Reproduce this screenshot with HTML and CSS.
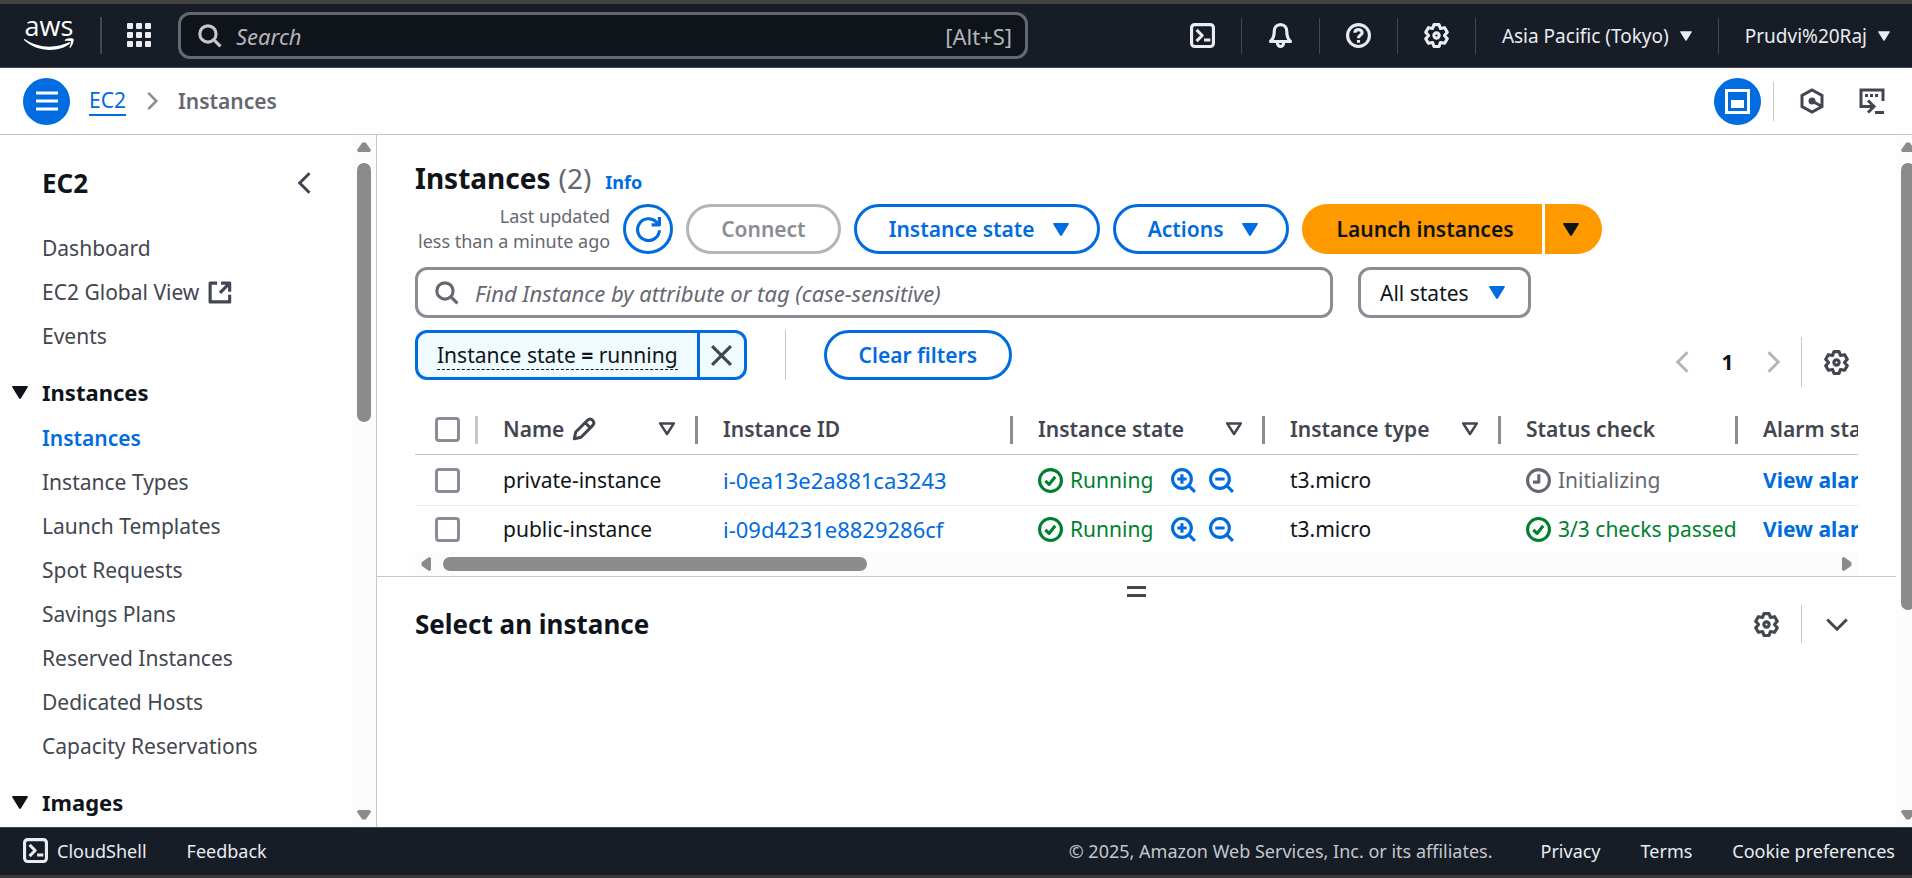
FILE: index.html
```html
<!DOCTYPE html>
<html lang="en">
<head>
<meta charset="utf-8">
<title>Instances | EC2 | Asia Pacific (Tokyo)</title>
<link rel="stylesheet" href="styles.css">
</head>
<body>
<svg class="sprite" aria-hidden="true">
  <symbol id="i-search" viewBox="0 0 16 16"><circle cx="7" cy="7" r="5.2"/><path d="M11 11l4 4"/></symbol>
  <symbol id="i-shell" viewBox="0 0 16 16"><rect x="1" y="1" width="14" height="14" rx="2"/><path d="M4.2 4.4L7.8 8l-3.6 3.6M9 10.9h4"/></symbol>
  <symbol id="i-bell" viewBox="0 0 16 16"><path d="M8 1C5.400 1 4 3 4 5.200C4 8.500 3.400 10 1.600 11.800H14.400C12.600 10 12 8.500 12 5.200C12 3 10.600 1 8 1z"/><path d="M6 12.500C6 14 7 15 8 15S10 14 10 12.500"/></symbol>
  <symbol id="i-help" viewBox="0 0 16 16"><circle cx="8" cy="8" r="7"/><path d="M5.700 6.300C5.700 5 6.700 4.200 8 4.200S10.300 5 10.300 6.200C10.300 7.800 8 7.700 8 9.700M8 10.900v1.800"/></symbol>
  <symbol id="i-gear" viewBox="0 0 16 16"><path d="M6.400 1H9.600L10.500 3.500L13.200 3L14.900 5.900L13.100 8L14.900 10.100L13.200 13L10.500 12.500L9.600 15H6.400L5.500 12.500L2.800 13L1.100 10.100L2.900 8L1.100 5.900L2.800 3L5.500 3.500z"/><circle cx="8" cy="8" r="1.700"/></symbol>
  <symbol id="i-caret" viewBox="0 0 16 13"><path class="solid" d="M1 0H15Q16.500 0 15.600 1.400L9 12.200Q8 13.600 7 12.200L.4 1.400Q-.5 0 1 0z"/></symbol>
  <symbol id="i-sort" viewBox="0 0 16 16"><path d="M2.500 3.500h11L8 12z"/></symbol>
  <symbol id="i-left" viewBox="0 0 16 16"><path d="M11 1.500L4.500 8l6.500 6.500"/></symbol>
  <symbol id="i-right" viewBox="0 0 16 16"><path d="M5 1.500L11.500 8L5 14.500"/></symbol>
  <symbol id="i-down" viewBox="0 0 16 16"><path d="M1.500 5L8 11.500L14.500 5"/></symbol>
  <symbol id="i-close" viewBox="0 0 16 16"><path d="M2 2l12 12M14 2L2 14"/></symbol>
  <symbol id="i-external" viewBox="0 0 16 16"><path d="M6.500 2H2v12h12.500v-4.500M9 2h5.500v5.500M14 2.500L8.300 8.200"/></symbol>
  <symbol id="i-refresh" viewBox="0 0 16 16"><path d="M15 8.500A7 7 0 1 1 13 3.200L14.500 4.500M15 0v5h-5"/></symbol>
  <symbol id="i-pencil" viewBox="0 0 16 16"><path d="M1.500 14.500L2.500 10L10.500 2C11.500 1 12.700 1 13.600 2S15 4.300 14 5.400L6 13.500zM9 4l3.300 3.300"/></symbol>
  <symbol id="i-ok" viewBox="0 0 16 16"><circle cx="8" cy="8" r="7"/><path d="M4.700 8.200l2.400 2.300L11 5.600"/></symbol>
  <symbol id="i-clock" viewBox="0 0 16 16"><circle cx="8" cy="8" r="7"/><path d="M8.200 4v5H4.500"/></symbol>
  <symbol id="i-zoomin" viewBox="0 0 16 16"><circle cx="7" cy="7" r="6"/><path d="M11.300 11.300L15.300 15.300M7 4v6M4 7h6"/></symbol>
  <symbol id="i-zoomout" viewBox="0 0 16 16"><circle cx="7" cy="7" r="6"/><path d="M11.300 11.300L15.300 15.300M4 7h6"/></symbol>
</svg>

<div class="app">
  <header class="topbar">
    <a class="logo" href="#" aria-label="AWS home">
      <svg width="50" height="42" viewBox="0 -8 50 42"><text x="25" y="17" text-anchor="middle">aws</text><path class="solid" d="M0 21C12 33 35 34 46 24.500C46.800 23.800 46 22.800 45 23.300C32 29.500 14 29.500 1 20.300C.2 19.800-.5 20.400 0 21z"/><path class="solid" d="M41 20.700C44 18.700 49 19 49.600 20C50 21 49 26.500 46.300 28.800C45.800 29.200 45.300 28.900 45.500 28.300C46.300 26.500 47.300 23.500 46.800 22.500C46.200 21.600 43 21.900 41.500 22C41 22 40.500 21.200 41 20.700z"/></svg>
    </a>
    <button class="services" aria-label="Services">
      <svg width="25" height="25" viewBox="0 0 25 25"><g class="solid"><rect width="6" height="6" rx="1"/><rect x="9" width="6" height="6" rx="1"/><rect x="18" width="6" height="6" rx="1"/><rect y="9" width="6" height="6" rx="1"/><rect x="9" y="9" width="6" height="6" rx="1"/><rect x="18" y="9" width="6" height="6" rx="1"/><rect y="18" width="6" height="6" rx="1"/><rect x="9" y="18" width="6" height="6" rx="1"/><rect x="18" y="18" width="6" height="6" rx="1"/></g></svg>
    </button>
    <label class="global-search">
      <svg class="icon"><use href="#i-search"/></svg>
      <input type="search" placeholder="Search" aria-label="Search">
      <span class="hint">[Alt+S]</span>
    </label>
    <nav class="tools" aria-label="Account tools">
      <button class="tool" aria-label="CloudShell"><svg class="icon"><use href="#i-shell"/></svg></button>
      <button class="tool" aria-label="Notifications"><svg class="icon"><use href="#i-bell"/></svg></button>
      <button class="tool" aria-label="Help"><svg class="icon"><use href="#i-help"/></svg></button>
      <button class="tool" aria-label="Settings"><svg class="icon"><use href="#i-gear"/></svg></button>
      <button class="tool menu">Asia Pacific (Tokyo)<svg class="caret-s"><use href="#i-caret"/></svg></button>
      <button class="tool menu">Prudvi%20Raj<svg class="caret-s"><use href="#i-caret"/></svg></button>
    </nav>
  </header>

  <div class="crumbbar">
    <button class="round" aria-label="Toggle navigation"><svg width="22" height="20" viewBox="0 0 22 20"><path d="M0 2h22M0 10h22M0 18h22"/></svg></button>
    <nav class="crumbs" aria-label="Breadcrumb">
      <a href="#">EC2</a>
      <svg class="sep"><use href="#i-right"/></svg>
      <span>Instances</span>
    </nav>
    <div class="crumb-tools">
      <button class="round" aria-label="Split panel"><svg width="25" height="25" viewBox="0 0 25 25"><rect x="1.500" y="1.500" width="22" height="22"/><rect class="solid" x="6" y="11" width="13" height="8"/></svg></button>
      <button class="plain" aria-label="Diagnose"><svg width="24" height="26" viewBox="0 0 24 26"><path d="M12 2L22 7.500V18.500L12 24L2 18.500V7.500zM12 13L21 18"/><circle class="solid" cx="12" cy="13" r="3.500"/></svg></button>
      <button class="plain" aria-label="Console to code"><svg width="26" height="26" viewBox="0 0 26 26"><path d="M12 18.500H2V2h22v11M8 18.500h6M9 12.500l6 6l-6 6M16 24.500h9"/><path class="dots" d="M6 7.500h14"/></svg></button>
    </div>
  </div>

  <div class="workspace">
    <aside class="sidebar">
      <nav class="side-content" aria-label="EC2">
        <div class="side-head"><h2>EC2</h2><button class="plain" aria-label="Close navigation"><svg class="chev"><use href="#i-left"/></svg></button></div>
        <ul>
          <li><a href="#">Dashboard</a></li>
          <li><a href="#">EC2 Global View<svg class="icon"><use href="#i-external"/></svg></a></li>
          <li><a href="#">Events</a></li>
        </ul>
        <h3><svg class="caret"><use href="#i-caret"/></svg>Instances</h3>
        <ul>
          <li><a class="active" href="#">Instances</a></li>
          <li><a href="#">Instance Types</a></li>
          <li><a href="#">Launch Templates</a></li>
          <li><a href="#">Spot Requests</a></li>
          <li><a href="#">Savings Plans</a></li>
          <li><a href="#">Reserved Instances</a></li>
          <li><a href="#">Dedicated Hosts</a></li>
          <li><a href="#">Capacity Reservations</a></li>
        </ul>
        <h3><svg class="caret"><use href="#i-caret"/></svg>Images</h3>
      </nav>
      <div class="vscroll" aria-hidden="true"><i class="arrow up"></i><i class="thumb"></i><i class="arrow down"></i></div>
    </aside>

    <main class="main">
      <section class="listing">
        <div class="title"><h1>Instances</h1><span class="count">(2)</span><a href="#">Info</a></div>
        <div class="actions">
          <p class="updated">Last updated<br>less than a minute ago</p>
          <button class="btn icon-only" aria-label="Refresh"><svg class="icon"><use href="#i-refresh"/></svg></button>
          <button class="btn" disabled>Connect</button>
          <button class="btn">Instance state<svg class="caret"><use href="#i-caret"/></svg></button>
          <button class="btn">Actions<svg class="caret"><use href="#i-caret"/></svg></button>
          <div class="split"><button class="launch">Launch instances</button><button class="more" aria-label="More launch options"><svg class="caret"><use href="#i-caret"/></svg></button></div>
        </div>
        <div class="filters">
          <label class="find"><svg class="icon"><use href="#i-search"/></svg><input type="search" placeholder="Find Instance by attribute or tag (case-sensitive)" aria-label="Find Instance"></label>
          <div class="states"><select aria-label="State filter"><option>All states</option></select><svg class="caret"><use href="#i-caret"/></svg></div>
        </div>
        <div class="tokens">
          <div class="applied">
            <div class="token"><button class="token-text"><span>Instance state <b>=</b> running</span></button><button class="token-x" aria-label="Remove filter"><svg class="cross"><use href="#i-close"/></svg></button></div>
            <div class="clear"><button class="btn">Clear filters</button></div>
          </div>
          <div class="pages">
            <button class="plain" disabled aria-label="Previous page"><svg class="chev"><use href="#i-left"/></svg></button>
            <button class="plain current">1</button>
            <button class="plain" disabled aria-label="Next page"><svg class="chev"><use href="#i-right"/></svg></button>
            <button class="plain prefs" aria-label="Preferences"><svg class="icon"><use href="#i-gear"/></svg></button>
          </div>
        </div>
        <div class="table-wrap">
          <table>
            <colgroup><col class="c-check"><col class="c-name"><col class="c-id"><col class="c-state"><col class="c-type"><col class="c-status"><col class="c-alarm"></colgroup>
            <thead>
              <tr>
                <th class="check soft"><input type="checkbox" aria-label="Select all"></th>
                <th><div class="th">Name<svg class="pencil"><use href="#i-pencil"/></svg><svg class="sort"><use href="#i-sort"/></svg></div></th>
                <th><div class="th">Instance ID</div></th>
                <th><div class="th">Instance state<svg class="sort"><use href="#i-sort"/></svg></div></th>
                <th><div class="th">Instance type<svg class="sort"><use href="#i-sort"/></svg></div></th>
                <th><div class="th">Status check</div></th>
                <th><div class="th">Alarm status</div></th>
              </tr>
            </thead>
            <tbody>
              <tr>
                <td class="check"><input type="checkbox" aria-label="Select private-instance"></td>
                <td>private-instance</td>
                <td><a class="id" href="#">i-0ea13e2a881ca3243</a></td>
                <td><div class="cell"><span class="ok"><svg class="icon"><use href="#i-ok"/></svg>Running</span><button class="plain zoom" aria-label="Include state"><svg class="icon"><use href="#i-zoomin"/></svg></button><button class="plain zoom" aria-label="Exclude state"><svg class="icon"><use href="#i-zoomout"/></svg></button></div></td>
                <td>t3.micro</td>
                <td><div class="cell"><span class="wait"><svg class="icon"><use href="#i-clock"/></svg>Initializing</span></div></td>
                <td><a class="strong" href="#">View alarms</a></td>
              </tr>
              <tr>
                <td class="check"><input type="checkbox" aria-label="Select public-instance"></td>
                <td>public-instance</td>
                <td><a class="id" href="#">i-09d4231e8829286cf</a></td>
                <td><div class="cell"><span class="ok"><svg class="icon"><use href="#i-ok"/></svg>Running</span><button class="plain zoom" aria-label="Include state"><svg class="icon"><use href="#i-zoomin"/></svg></button><button class="plain zoom" aria-label="Exclude state"><svg class="icon"><use href="#i-zoomout"/></svg></button></div></td>
                <td>t3.micro</td>
                <td><div class="cell"><span class="ok"><svg class="icon"><use href="#i-ok"/></svg>3/3 checks passed</span></div></td>
                <td><a class="strong" href="#">View alarms</a></td>
              </tr>
            </tbody>
          </table>
        </div>
        <div class="hscroll" aria-hidden="true"><i class="arrow left"></i><i class="thumb"></i><i class="arrow right"></i></div>
      </section>
      <section class="panel">
        <div class="handle" role="separator" aria-label="Resize panel"></div>
        <div class="panel-head">
          <h2>Select an instance</h2>
          <button class="plain" aria-label="Panel preferences"><svg class="icon"><use href="#i-gear"/></svg></button>
          <button class="plain collapse" aria-label="Collapse panel"><svg class="chev"><use href="#i-down"/></svg></button>
        </div>
      </section>
    </main>
    <div class="vscroll page" aria-hidden="true"><i class="arrow up"></i><i class="thumb"></i><i class="arrow down"></i></div>
  </div>

  <footer class="footer">
    <button class="shell"><svg class="icon"><use href="#i-shell"/></svg>CloudShell</button>
    <a class="feedback" href="#">Feedback</a>
    <span class="copy">© 2025, Amazon Web Services, Inc. or its affiliates.</span>
    <a href="#">Privacy</a>
    <a href="#">Terms</a>
    <a href="#">Cookie preferences</a>
  </footer>
</div>
</body>
</html>
```

FILE: styles.css
```css
:root {
  --blue: #006ce0;
  --ink: #0f141a;
  --slate: #424650;
  --grey: #656871;
  --mid: #8c8c94;
  --line: #c6c6cd;
  --navy: #161d26;
  --green: #00802f;
  --thumb: #8b8b8b;
}

* { box-sizing: border-box; }

body {
  margin: 0;
  font: 21px/30px "Noto Sans", "Open Sans", sans-serif;
  color: var(--ink);
  background: #fff;
}

button, input, select { font: inherit; color: inherit; margin: 0; }
button { background: none; border: 0; padding: 0; cursor: pointer; }
a { color: var(--blue); text-decoration: none; }
h1, h2, h3, p, ul { margin: 0; padding: 0; }
ul { list-style: none; }

svg { flex: none; fill: none; stroke: currentColor; stroke-width: 3; display: block; }
.sprite { position: absolute; width: 0; height: 0; }
.solid { fill: currentColor; stroke: none; }
.icon { width: 25px; height: 25px; stroke-width: 2; stroke-linejoin: round; }
.caret { width: 16px; height: 13px; }
.caret-s { width: 12px; height: 10px; }
.chev { width: 24px; height: 24px; stroke-width: 2; }
.plain { display: flex; align-items: center; justify-content: center; color: var(--slate); }

.app { display: flex; flex-direction: column; height: 100vh; overflow: hidden; border-top: 4px solid #434341; border-bottom: 3px solid #39393b; }

/* top bar */
.topbar { display: flex; align-items: center; flex: none; height: 64px; padding: 0 22px 0 24px; background: var(--navy); color: #ebebf0; border-bottom: 1px solid var(--slate); font-size: 19px; }
.logo { display: flex; padding-bottom: 8px; color: #fff; }
.logo text { font: 500 27px "Open Sans", sans-serif; fill: #fff; stroke: none; }
.services { display: flex; align-items: center; height: 37px; margin-left: 26px; padding: 0 26px 0 25px; border-left: 2px solid var(--slate); }
.global-search { display: flex; align-items: center; flex: 0 1 850px; min-width: 0; height: 47px; padding: 0 13px 0 16px; gap: 14px; background: var(--ink); border: 3px solid var(--grey); border-radius: 12px; font-size: 22px; color: #b4b4bb; }
.global-search .icon { color: #c6c6cd; }
input[type="search"] { flex: 1; min-width: 0; padding: 0; border: 0; outline: 0; background: none; appearance: none; }
input::placeholder { font-style: italic; color: inherit; opacity: 1; }
.tools { display: flex; align-items: center; margin-left: auto; }
.tool { display: flex; align-items: center; height: 36px; padding: 0 26px; white-space: nowrap; }
.tool + .tool { border-left: 1px solid var(--slate); }
.tool.menu { gap: 11px; }
.tool:last-child { padding-right: 0; }

/* breadcrumb bar */
.crumbbar { display: flex; align-items: center; flex: none; height: 67px; padding: 0 27px 0 23px; border-bottom: 1px solid var(--line); }
.round { display: flex; align-items: center; justify-content: center; width: 47px; height: 47px; border-radius: 50%; background: var(--blue); color: #fff; }
.crumbs { display: flex; align-items: center; gap: 16px; margin-left: 19px; }
.crumbs a { border-bottom: 2px solid var(--blue); line-height: 28px; }
.crumbs span { font-weight: 600; color: var(--grey); }
.sep { width: 20px; height: 20px; stroke-width: 2; color: var(--mid); }
.crumb-tools { display: flex; align-items: center; margin-left: auto; }
.crumb-tools .plain { height: 39px; }
.crumb-tools .round + .plain { margin-left: 12px; width: 76px; border-left: 1px solid var(--line); }
.crumb-tools .plain:last-child { justify-content: flex-end; width: 36px; }
.dots { stroke-dasharray: 3 2; }

/* body */
.workspace { display: flex; flex: 1; min-height: 0; }
.sidebar { display: flex; flex: none; width: 377px; border-right: 1px solid var(--line); overflow: hidden; }
.side-content { flex: 1; padding: 30px 35px 0 12px; }
.side-head { display: flex; align-items: center; justify-content: space-between; height: 36px; padding-left: 30px; margin-bottom: 25px; }
h2 { font-size: 26px; line-height: 36px; font-weight: 700; }
.side-content li { height: 44px; padding: 7px 0 7px 30px; white-space: nowrap; }
.side-content li a { display: flex; align-items: center; gap: 8px; color: var(--slate); }
.side-content li a.active { color: var(--blue); font-weight: 600; }
h3 { display: flex; align-items: center; gap: 14px; height: 48px; margin-top: 10px; font-size: 22px; font-weight: 700; }

.vscroll { display: flex; flex-direction: column; align-items: center; flex: none; width: 24px; padding: 7px 0; background: #fcfcfc; overflow: hidden; }
.vscroll .thumb { width: 14px; height: 259px; margin-top: 11px; border-radius: 7px; background: var(--thumb); }
.vscroll.page { width: 16px; align-items: flex-start; padding-left: 5px; }
.vscroll.page .arrow, .vscroll.page .thumb { flex: none; }
.vscroll.page .thumb { height: 66%; }
.arrow { width: 14px; height: 10px; background: var(--thumb); }
.arrow.up { clip-path: polygon(38% 6%, 62% 6%, 100% 80%, 92% 100%, 8% 100%, 0 80%); }
.arrow.down { margin-top: auto; clip-path: polygon(8% 0, 92% 0, 100% 20%, 62% 94%, 38% 94%, 0 20%); }
.arrow.left, .arrow.right { width: 10px; height: 14px; }
.arrow.left { clip-path: polygon(80% 0, 100% 8%, 100% 92%, 80% 100%, 6% 62%, 6% 38%); }
.arrow.right { margin-left: auto; clip-path: polygon(20% 0, 94% 38%, 94% 62%, 20% 100%, 0 92%, 0 8%); }

.main { flex: 1; min-width: 0; display: flex; flex-direction: column; }
.listing { padding: 23px 38px 0; }
.title { display: flex; align-items: baseline; height: 42px; line-height: 40px; }
h1 { font-size: 28px; font-weight: 700; line-height: 40px; }
.count { margin-left: 8px; font-size: 28px; color: var(--grey); }
.title a { margin-left: 14px; font-size: 18px; font-weight: 700; }

.actions { display: flex; align-items: center; gap: 13px; margin-top: 4px; }
.updated { padding-left: 3px; font-size: 18px; line-height: 25px; text-align: right; color: var(--grey); white-space: nowrap; }
.btn { display: flex; align-items: center; gap: 18px; height: 50px; padding: 0 32px; border: 3px solid var(--blue); border-radius: 25px; color: var(--blue); font-weight: 600; white-space: nowrap; }
.btn:disabled { border-color: #b4b4bb; color: var(--mid); }
.btn .caret { margin-right: -4px; }
.icon-only { width: 50px; padding: 0; justify-content: center; }
.split { display: flex; gap: 3px; }
.launch, .more { height: 50px; background: #f90; font-weight: 600; white-space: nowrap; }
.launch { padding: 0 28px 0 35px; border-radius: 25px 0 0 25px; }
.more { padding: 0 23px 0 18px; border-radius: 0 25px 25px 0; }

.filters { display: flex; gap: 25px; margin-top: 13px; padding-right: 327px; }
.find { display: flex; align-items: center; flex: 1; height: 51px; padding: 0 16px; gap: 16px; border: 3px solid var(--mid); border-radius: 12px; color: var(--grey); font-size: 22px; }
.states { position: relative; width: 173px; }
.states select { width: 100%; height: 51px; padding: 0 19px; appearance: none; background: #fff; border: 3px solid var(--mid); border-radius: 12px; }
.states .caret { position: absolute; right: 26px; top: 19px; color: var(--blue); pointer-events: none; }

.tokens { display: flex; justify-content: space-between; height: 57px; margin-top: 12px; }
.applied { display: flex; align-items: flex-start; gap: 38px; }
.token { display: flex; height: 50px; border: 3px solid var(--blue); border-radius: 12px; background: #f0fbff; overflow: hidden; }
.token-text { padding: 0 19px; }
.token-text span { border-bottom: 1px dashed var(--ink); }
.token-x { width: 47px; display: flex; align-items: center; justify-content: center; border-left: 3px solid var(--blue); color: var(--slate); }
.cross { width: 25px; height: 25px; stroke-width: 2; }
.clear { border-left: 1px solid var(--line); padding-left: 38px; }
.pages { display: flex; align-items: center; align-self: flex-end; height: 50px; }
.pages .plain { width: 45px; height: 50px; }
.pages .plain:disabled { color: #b4b4bb; }
.pages .current { color: var(--ink); font-weight: 700; font-size: 21px; }
.pages .prefs { width: 57px; margin-left: 6px; padding-right: 9px; justify-content: flex-end; border-left: 1px solid var(--line); }

.table-wrap { margin-top: 17px; overflow: hidden; }
table { width: 1563px; table-layout: fixed; border-collapse: separate; border-spacing: 0; }
.c-check { width: 63px; }
.c-name { width: 220px; }
.c-id { width: 315px; }
.c-state { width: 252px; }
.c-type { width: 236px; }
.c-status { width: 237px; }
.c-alarm { width: 240px; }
th { position: relative; height: 51px; padding: 0 21px 0 25px; text-align: left; color: var(--slate); font-weight: 600; border-bottom: 1px solid var(--line); }
th::after { content: ""; position: absolute; right: 0; top: 12px; width: 3px; height: 28px; background: var(--mid); }
th.soft::after { background: var(--line); }
.th { display: flex; align-items: center; }
.pencil { width: 24px; height: 24px; margin-left: 8px; stroke-width: 2; stroke-linejoin: round; }
.sort { width: 20px; height: 20px; margin-left: auto; stroke-width: 2; stroke-linejoin: round; }
td { height: 51px; padding: 0 0 0 25px; overflow: hidden; white-space: nowrap; border-bottom: 1px solid #ebebf0; }
tbody tr:last-child td { height: 46px; border-bottom: 0; }
.check { padding: 0 0 0 20px; }
.check input { display: block; width: 25px; height: 25px; appearance: none; background: #fff; border: 3px solid var(--mid); border-radius: 4px; }
.id { font-size: 22px; }
.cell { display: flex; align-items: center; gap: 13px; }
.ok, .wait { display: flex; align-items: center; gap: 7px; padding-right: 5px; color: var(--green); }
.wait { color: var(--grey); }
.zoom { color: var(--blue); }
.strong { font-weight: 700; }

.hscroll { display: flex; align-items: center; height: 24px; padding: 0 6px; background: #fcfcfc; }
.hscroll .thumb { width: 424px; height: 14px; margin-left: 12px; border-radius: 7px; background: var(--thumb); }

.panel { flex: 1; padding: 9px 38px 0; border-top: 1px solid var(--line); }
.handle { width: 19px; height: 11px; margin: 0 auto; border-top: 3px solid var(--slate); border-bottom: 3px solid var(--slate); }
.panel-head { display: flex; align-items: center; margin-top: 8px; height: 38px; }
.panel-head h2 { margin-right: auto; }
.panel-head .collapse { width: 57px; height: 38px; margin-left: 22px; padding-right: 9px; justify-content: flex-end; border-left: 1px solid var(--line); }

/* footer */
.footer { display: flex; align-items: center; flex: none; height: 48px; padding: 0 17px 2px 23px; gap: 40px; background: var(--navy); color: #ebebf0; border-top: 1px solid var(--slate); font-size: 18px; white-space: nowrap; }
.footer a { color: #ebebf0; }
.shell { display: flex; align-items: center; gap: 9px; }
.copy { margin-left: auto; margin-right: 8px; color: #c6c6cd; }
```
